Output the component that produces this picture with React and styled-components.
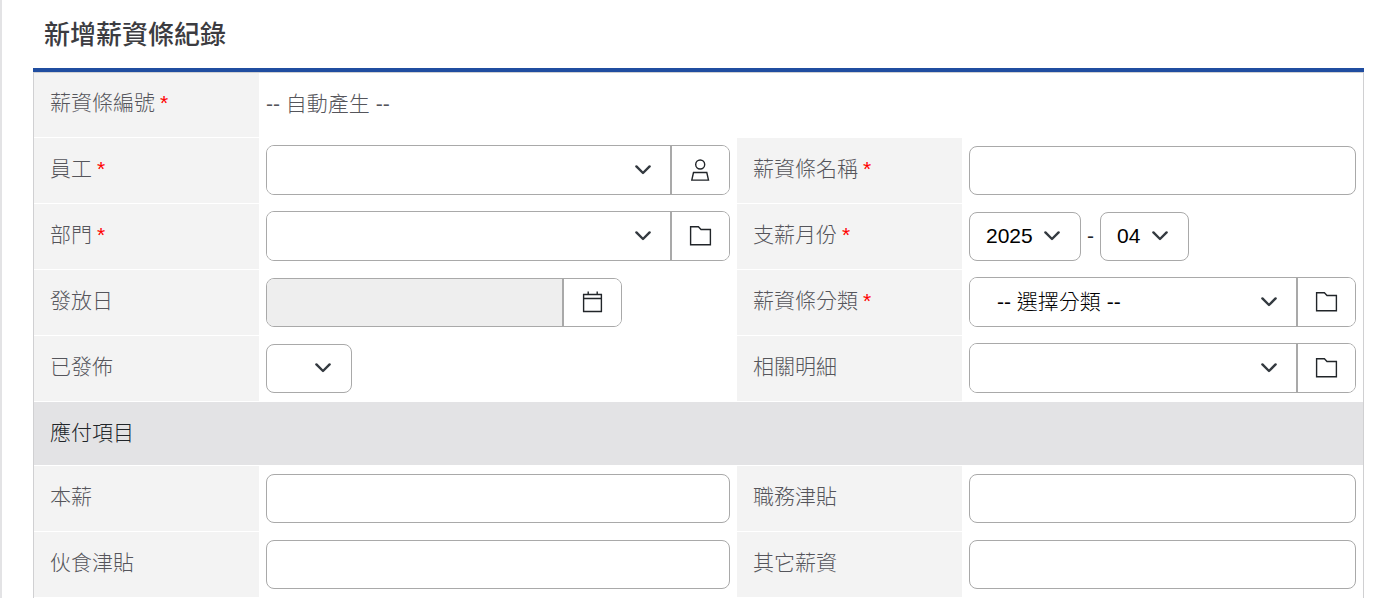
import React from 'react';
import styled, { createGlobalStyle } from 'styled-components';

const GlobalStyle = createGlobalStyle`
  * {
    box-sizing: border-box;
  }
  body {
    margin: 0;
    background-color: #fff;
    font-family: 'Liberation Sans', 'Noto Sans CJK TC', sans-serif;
    font-size: 21px;
    font-weight: 300;
    line-height: 30px;
    color: #212529;
  }
`;

const Page = styled.main`
  min-height: 100vh;
  border-left: 2px solid #e3e3e5;
  padding: 0 36px 0 31px;
`;
const Title = styled.h1`
  margin: 0;
  padding: 15px 11px 13px;
  font-size: 26px;
  font-weight: 500;
  line-height: 40px;
  color: #3c3c41;
`;
const Form = styled.form`
  border-top: 4px solid #204da0;
`;
const Grid = styled.div`
  display: grid;
  grid-template-columns: 225px minmax(0, 478fr) 225px minmax(0, 401fr);
  border: 1px solid #d0d0d2;
  border-bottom: none;
`;
const Label = styled.label`
  display: flex;
  align-items: center;
  gap: 5px;
  min-height: ${(props) => (props.$short ? '65px' : '66px')};
  padding: 0 16px 4px;
  border-bottom: 1px solid #fff;
  background-color: #f3f3f3;
  color: #55555b;
`;
const Star = styled.span`
  color: #f00;
`;
const Field = styled.div`
  display: flex;
  align-items: center;
  gap: 6px;
  padding: 0 7px 2px;
  grid-column: ${(props) => (props.$wide ? 'span 3' : 'auto')};
`;
const Auto = styled.output`
  padding-bottom: 2px;
  color: #55555b;
`;
const Section = styled.h2`
  grid-column: 1 / -1;
  margin: 0;
  padding: 16px 16px 17px;
  border-bottom: 1px solid #fff;
  background-color: #e3e3e5;
  font-size: 21px;
  font-weight: 300;
  line-height: 30px;
`;

const Input = styled.input`
  flex: 1;
  min-width: 0;
  height: 49px;
  padding: 0 16px;
  border: 1px solid #a9a9a9;
  border-radius: 8px;
  background-color: #fff;
  font: inherit;
`;
const chevron =
  "%3Csvg xmlns='http://www.w3.org/2000/svg' viewBox='0 0 16 10'%3E%3Cpath fill='none' stroke='%23343a40' stroke-linecap='round' stroke-linejoin='round' stroke-width='2.4' d='M1.4 1.4 8 8l6.6-6.6'/%3E%3C/svg%3E";
const Select = styled.select`
  appearance: none;
  width: ${(props) => props.$width || 'auto'};
  height: 49px;
  padding: 0 44px 0 16px;
  border: 1px solid #a9a9a9;
  border-radius: 8px;
  background: #fff url("data:image/svg+xml,${chevron}") no-repeat right 20px center / 16px 10px;
  font: inherit;
  color: #000;
`;

const Combo = styled.div`
  display: flex;
  flex: ${(props) => (props.$width ? 'none' : '1')};
  width: ${(props) => props.$width || 'auto'};
  min-width: 0;
  height: ${(props) => (props.$width ? '49px' : '50px')};
  overflow: hidden;
  border: 1px solid #a9a9a9;
  border-radius: 8px;
`;
const ComboSelect = styled(Select)`
  flex: 1;
  min-width: 0;
  height: auto;
  padding-left: 27px;
  border: none;
  border-radius: 0;
  background-position: right 19px center;
`;
const ComboInput = styled(Input)`
  height: auto;
  border: none;
  border-radius: 0;
  background-color: #eee;
`;
const IconButton = styled.button`
  display: flex;
  align-items: center;
  justify-content: center;
  width: 59px;
  padding: 0;
  border: none;
  border-left: 2px solid #a9a9a9;
  background-color: #fff;
  cursor: pointer;
`;
const Svg = styled.svg`
  width: 23px;
  height: 23px;
  fill: none;
  stroke: #212529;
  stroke-width: 1.4;
`;

function UserIcon() {
  return (
    <Svg viewBox="0 0 23 23">
      <circle cx="11.2" cy="5.5" r="4.5" />
      <path d="M4.5 13.5h13.3l1.7 7.6H2.8z" />
    </Svg>
  );
}

function FolderIcon() {
  return (
    <Svg viewBox="0 0 23 23">
      <path d="M1.6 1.8h7.8l2.6 2.7h9.4v15.2H1.6z" />
    </Svg>
  );
}

function CalendarIcon() {
  return (
    <Svg viewBox="0 0 23 23">
      <path d="M2.6 3.5h17.8v17H2.6zM2.6 7.5h17.8M7.2 0.5v3M16.2 0.5v3" />
    </Svg>
  );
}

function FieldLabel({ id, required, short, children }) {
  return (
    <Label htmlFor={id} $short={short}>
      {children}
      {required && <Star>*</Star>}
    </Label>
  );
}

function Picker({ id, title, placeholder = '', icon }) {
  return (
    <Combo>
      <ComboSelect id={id}>
        <option value="">{placeholder}</option>
      </ComboSelect>
      <IconButton type="button" aria-label={title}>
        {icon}
      </IconButton>
    </Combo>
  );
}

const amounts = [
  { id: 'basePay', label: '本薪' },
  { id: 'dutyAllowance', label: '職務津貼' },
  { id: 'mealAllowance', label: '伙食津貼' },
  { id: 'otherPay', label: '其它薪資' },
];

function App() {
  return (
    <Page>
      <GlobalStyle />
      <Title>新增薪資條紀錄</Title>
      <Form>
        <Grid>
          <FieldLabel id="slipNo" required short>
            薪資條編號
          </FieldLabel>
          <Field $wide>
            <Auto id="slipNo">-- 自動產生 --</Auto>
          </Field>

          <FieldLabel id="employee" required>
            員工
          </FieldLabel>
          <Field>
            <Picker id="employee" title="選擇員工" icon={<UserIcon />} />
          </Field>
          <FieldLabel id="slipName" required>
            薪資條名稱
          </FieldLabel>
          <Field>
            <Input id="slipName" type="text" />
          </Field>

          <FieldLabel id="department" required>
            部門
          </FieldLabel>
          <Field>
            <Picker id="department" title="選擇部門" icon={<FolderIcon />} />
          </Field>
          <FieldLabel id="payYear" required>
            支薪月份
          </FieldLabel>
          <Field>
            <Select id="payYear" $width="112px">
              <option>2025</option>
            </Select>
            <span>-</span>
            <Select aria-label="月" $width="89px">
              <option>04</option>
            </Select>
          </Field>

          <FieldLabel id="payDate">發放日</FieldLabel>
          <Field>
            <Combo $width="356px">
              <ComboInput id="payDate" type="text" readOnly />
              <IconButton type="button" aria-label="選擇日期">
                <CalendarIcon />
              </IconButton>
            </Combo>
          </Field>
          <FieldLabel id="category" required>
            薪資條分類
          </FieldLabel>
          <Field>
            <Picker
              id="category"
              title="選擇分類"
              placeholder="-- 選擇分類 --"
              icon={<FolderIcon />}
            />
          </Field>

          <FieldLabel id="published">已發佈</FieldLabel>
          <Field>
            <Select id="published" $width="86px">
              <option value="" />
            </Select>
          </Field>
          <FieldLabel id="details">相關明細</FieldLabel>
          <Field>
            <Picker id="details" title="選擇明細" icon={<FolderIcon />} />
          </Field>

          <Section>應付項目</Section>
          {amounts.map((item) => (
            <React.Fragment key={item.id}>
              <FieldLabel id={item.id}>{item.label}</FieldLabel>
              <Field>
                <Input id={item.id} type="text" />
              </Field>
            </React.Fragment>
          ))}
        </Grid>
      </Form>
    </Page>
  );
}

export default App;
